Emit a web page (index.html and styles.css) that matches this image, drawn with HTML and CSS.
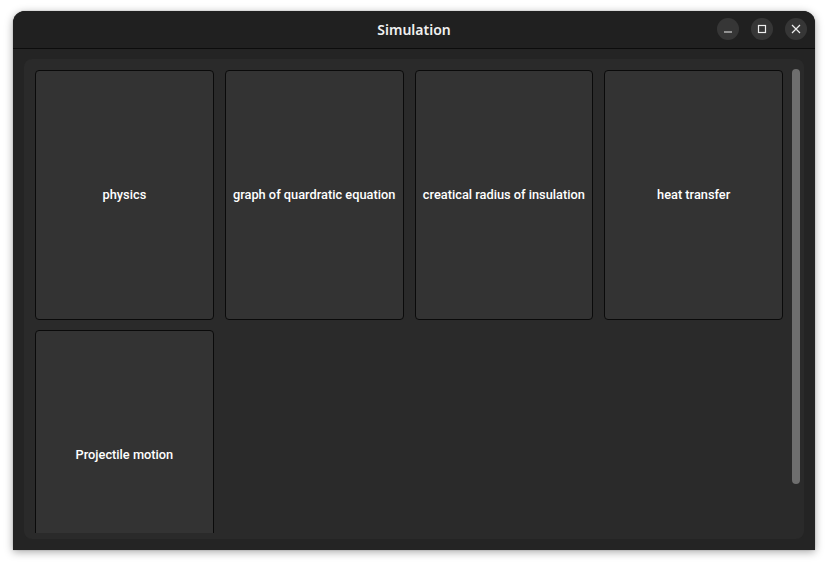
FILE: index.html
```html
<!DOCTYPE html>
<html>
<head>
<meta charset="utf-8">
<link rel="stylesheet" href="styles.css">
</head>
<body>
<div class="window">
  <div class="titlebar">
    <div class="title">Simulation</div>
    <div class="controls">
      <button class="ctl" aria-label="Minimize">
        <svg width="10" height="10" viewBox="0 0 10 10"><line x1="1" y1="8" x2="9" y2="8" stroke="#eee" stroke-width="1.2"/></svg>
      </button>
      <button class="ctl" aria-label="Maximize">
        <svg width="10" height="10" viewBox="0 0 10 10"><rect x="1.5" y="1.5" width="7" height="7" fill="none" stroke="#eee" stroke-width="1.2"/></svg>
      </button>
      <button class="ctl" aria-label="Close">
        <svg width="10" height="10" viewBox="0 0 10 10"><path d="M1 1 L9 9 M9 1 L1 9" stroke="#eee" stroke-width="1.2"/></svg>
      </button>
    </div>
  </div>
  <div class="content">
    <div class="panel">
      <div class="scroll">
        <div class="grid">
          <div class="card">physics</div>
          <div class="card">graph of quardratic equation</div>
          <div class="card">creatical radius of insulation</div>
          <div class="card">heat transfer</div>
          <div class="card">Projectile motion</div>
        </div>
        <div class="scrollbar"></div>
      </div>
    </div>
  </div>
</div>
</body>
</html>
```
FILE: styles.css
```css
html, body {
  margin: 0;
  padding: 0;
  background: #ffffff;
}
body {
  width: 828px;
  height: 566px;
  overflow: hidden;
  padding: 11px 13px 0;
  box-sizing: border-box;
}
.window {
  width: 802px;
  height: 539px;
  border-radius: 12px 12px 0 0;
  background: #242424;
  box-shadow: 0 2px 8px rgba(0,0,0,0.35), 0 0 1px rgba(0,0,0,0.5);
  display: flex;
  flex-direction: column;
  overflow: hidden;
}
.titlebar {
  height: 37px;
  flex: none;
  background: #202020;
  border-bottom: 1px solid #0c0c0c;
  position: relative;
  display: flex;
  align-items: center;
  justify-content: center;
}
.title {
  font-family: "Noto Sans", "DejaVu Sans", sans-serif;
  font-weight: 600;
  font-size: 14px;
  color: #f0f0f0;
}
.controls {
  position: absolute;
  right: 8px;
  top: 7px;
  display: flex;
  gap: 12px;
}
.ctl {
  width: 22px;
  height: 22px;
  border-radius: 50%;
  background: #363636;
  border: none;
  padding: 0;
  display: flex;
  align-items: center;
  justify-content: center;
}
.content {
  flex: 1;
  min-height: 0;
  padding: 10px 11px 11px;
  display: flex;
}
.panel {
  flex: 1;
  min-height: 0;
  background: #2a2a2a;
  border-radius: 8px;
  padding-bottom: 6px;
  display: flex;
}
.scroll {
  flex: 1;
  min-height: 0;
  position: relative;
  overflow: hidden;
}
.grid {
  display: grid;
  grid-template-columns: repeat(4, 1fr);
  grid-auto-rows: 250px;
  column-gap: 11px;
  row-gap: 10px;
  padding: 11px 21px 0 11px;
}
.card {
  background: #333333;
  border: 1px solid #0a0a0a;
  border-radius: 4px;
  display: flex;
  align-items: center;
  justify-content: center;
  text-align: center;
  padding-bottom: 2px;
  font-family: Roboto, "Liberation Sans", sans-serif;
  font-weight: 500;
  font-size: 12.8px;
  color: #ffffff;
}
.scrollbar {
  position: absolute;
  right: 4px;
  top: 10px;
  width: 8px;
  height: 415px;
  border-radius: 4px;
  background: #6e6e6e;
}
```
